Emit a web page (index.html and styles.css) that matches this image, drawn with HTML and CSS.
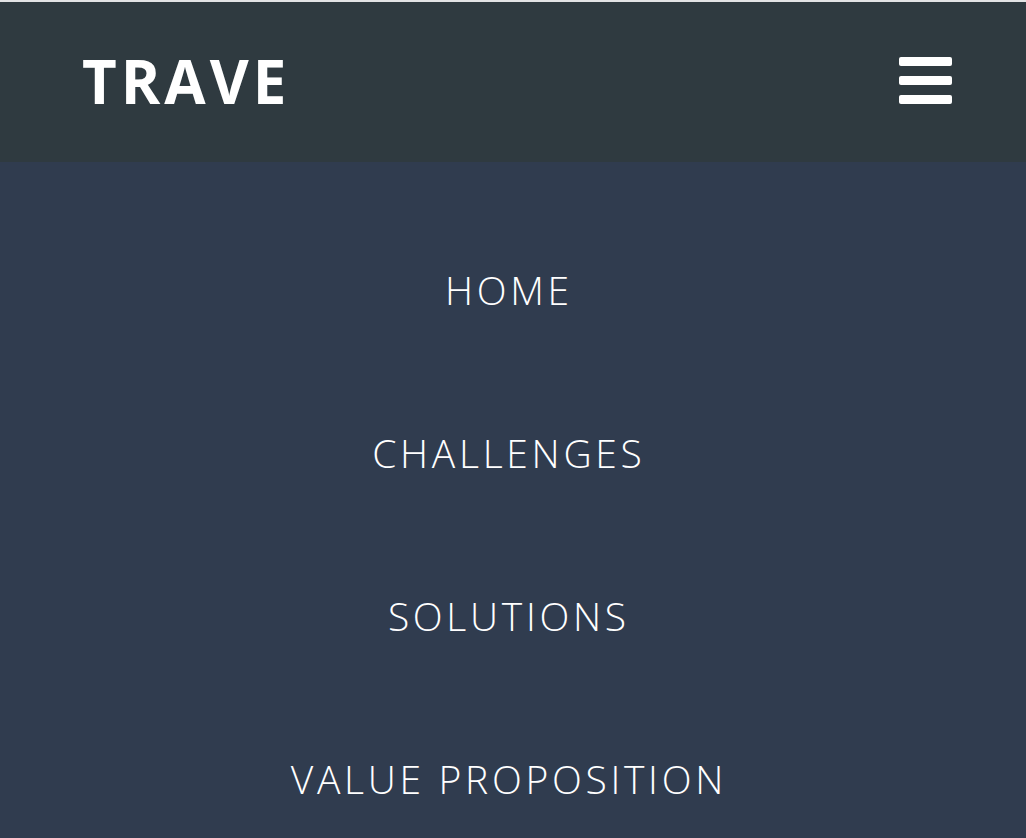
FILE: index.html
```html
<!DOCTYPE html>
<html lang="en">
<head>
<meta charset="utf-8">
<title>TRAVE</title>
<link rel="stylesheet" href="styles.css">
</head>
<body>
<header class="topbar">
  <div class="brand">TRAVE</div>
  <button class="menu-toggle" aria-label="Menu">
    <span class="bar"></span>
    <span class="bar"></span>
    <span class="bar"></span>
  </button>
</header>
<nav class="mobile-nav">
  <ul class="nav-list">
    <li class="nav-item"><a href="#">HOME</a></li>
    <li class="nav-item"><a href="#">CHALLENGES</a></li>
    <li class="nav-item"><a href="#">SOLUTIONS</a></li>
    <li class="nav-item"><a href="#">VALUE PROPOSITION</a></li>
  </ul>
</nav>
</body>
</html>
```
FILE: styles.css
```css
html, body {
  margin: 0;
  padding: 0;
}
body {
  border-top: 2px solid #e2e3e4;
  background: #303c4f;
  font-family: "Open Sans", "Liberation Sans", sans-serif;
  height: 836px;
  overflow: hidden;
}
.topbar {
  height: 160px;
  background: #2f3a40;
  display: flex;
  align-items: center;
  justify-content: space-between;
  padding: 0 74px 0 82px;
}
.brand {
  color: #fff;
  font-weight: 700;
  font-size: 60px;
  line-height: 1;
  letter-spacing: 4px;
  margin-top: -2px;
}
.menu-toggle {
  background: none;
  border: 0;
  padding: 0;
  display: flex;
  flex-direction: column;
  gap: 10px;
  cursor: pointer;
  margin-top: -3px;
}
.bar {
  display: block;
  width: 53px;
  height: 9px;
  border-radius: 2px;
  background: #fff;
}
.mobile-nav {
  padding: 46px 12px 0 0;
}
.nav-list {
  list-style: none;
  margin: 0;
  padding: 0;
}
.nav-item {
  height: 163px;
  display: flex;
  align-items: center;
  justify-content: center;
}
.nav-item a {
  color: #fff;
  text-decoration: none;
  font-weight: 300;
  font-size: 39px;
  line-height: 1;
  letter-spacing: 3.7px;
  padding-left: 3.7px;
}
```
